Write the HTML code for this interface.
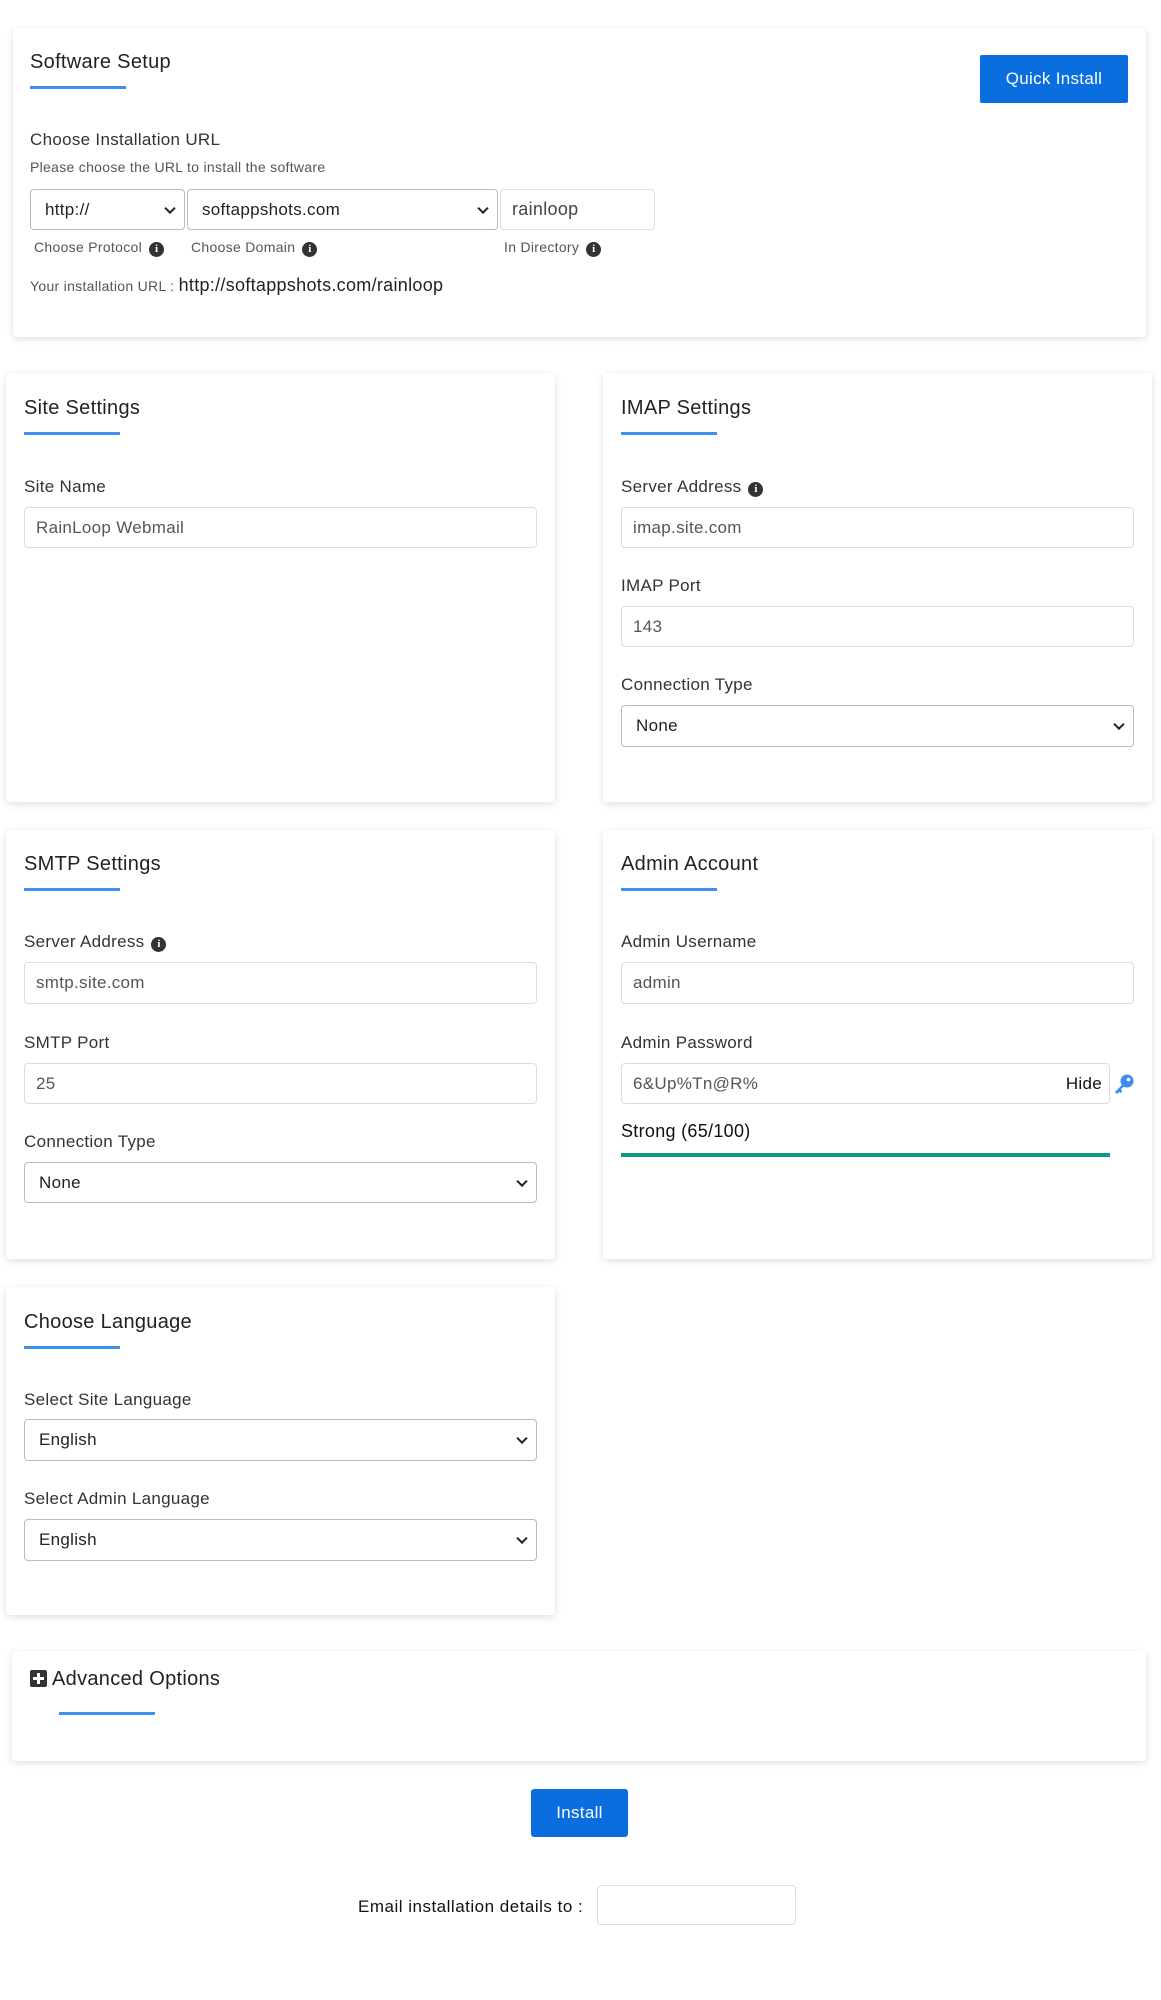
<!DOCTYPE html>
<html><head><meta charset="utf-8"><style>
*{box-sizing:border-box;margin:0;padding:0}
body{width:1161px;height:2000px;background:#fff;position:relative;font-family:"Liberation Sans",sans-serif;color:#222;overflow:hidden}
.card{position:absolute;background:#fff;border-radius:4px;box-shadow:0 2px 8px rgba(0,0,0,.13)}
.t{position:absolute;white-space:nowrap;line-height:24px;height:24px;margin-top:3px}
.h{font-size:20px;color:#222;letter-spacing:.3px}
.lb{font-size:17px;color:#333;letter-spacing:.3px}
.ul{position:absolute;height:3px;background:#3d8ef0;width:96px}
.in{position:absolute;border:1px solid #ddd;border-radius:4px;font-size:17px;color:#555;padding-left:11px;display:flex;align-items:center;background:#fff;letter-spacing:.3px}
.sel{position:absolute;border:1px solid #bbb;border-radius:4px;font-size:17px;color:#222;padding-left:14px;display:flex;align-items:center;background:#fff;letter-spacing:.3px}
.sel:after{content:"";position:absolute;right:10px;top:50%;width:6px;height:6px;border-right:2px solid #222;border-bottom:2px solid #222;transform:translateY(-70%) rotate(45deg)}
.i{display:inline-block;width:15px;height:15px;border-radius:50%;background:#333;color:#fff;font-size:11px;font-weight:bold;line-height:15px;text-align:center;vertical-align:0px;margin-left:7px;font-family:"Liberation Serif",serif;letter-spacing:0}
.sm{font-size:14px;color:#555;letter-spacing:.3px}
.btn{position:absolute;background:#0a6ede;color:#fff;font-size:17px;display:flex;align-items:center;justify-content:center;border-radius:2px;letter-spacing:.3px}
</style></head><body>

<div class="card" style="left:13px;top:28px;width:1133px;height:309px"></div>
<div class="t h" style="left:30px;top:47px">Software Setup</div>
<div class="ul" style="left:30px;top:86px"></div>
<div class="btn" style="left:980px;top:55px;width:148px;height:48px">Quick Install</div>
<div class="t lb" style="left:30px;top:125px">Choose Installation URL</div>
<div class="t sm" style="left:30px;top:152px">Please choose the URL to install the software</div>
<div class="sel" style="left:30px;top:189px;width:155px;height:41px;padding-left:14px">http://</div>
<div class="sel" style="left:187px;top:189px;width:311px;height:41px;padding-left:14px">softappshots.com</div>
<div class="in" style="left:500px;top:189px;width:155px;height:41px;color:#444;font-size:18px">rainloop</div>
<div class="t sm" style="left:34px;top:232px">Choose Protocol<span class="i">i</span></div>
<div class="t sm" style="left:191px;top:232px">Choose Domain<span class="i">i</span></div>
<div class="t sm" style="left:504px;top:232px">In Directory<span class="i">i</span></div>
<div class="t" style="left:30px;top:270px"><span class="sm">Your installation URL : </span><span style="font-size:18px;color:#222;letter-spacing:.3px">http://softappshots.com/rainloop</span></div>

<div class="card" style="left:6px;top:373px;width:549px;height:429px"></div>
<div class="t h" style="left:24px;top:393px">Site Settings</div>
<div class="ul" style="left:24px;top:432px"></div>
<div class="t lb" style="left:24px;top:472px">Site Name</div>
<div class="in" style="left:24px;top:507px;width:513px;height:41px">RainLoop Webmail</div>

<div class="card" style="left:603px;top:373px;width:549px;height:429px"></div>
<div class="t h" style="left:621px;top:393px">IMAP Settings</div>
<div class="ul" style="left:621px;top:432px"></div>
<div class="t lb" style="left:621px;top:472px">Server Address<span class="i">i</span></div>
<div class="in" style="left:621px;top:507px;width:513px;height:41px">imap.site.com</div>
<div class="t lb" style="left:621px;top:571px">IMAP Port</div>
<div class="in" style="left:621px;top:606px;width:513px;height:41px">143</div>
<div class="t lb" style="left:621px;top:670px">Connection Type</div>
<div class="sel" style="left:621px;top:705px;width:513px;height:42px">None</div>

<div class="card" style="left:6px;top:830px;width:549px;height:429px"></div>
<div class="t h" style="left:24px;top:849px">SMTP Settings</div>
<div class="ul" style="left:24px;top:888px"></div>
<div class="t lb" style="left:24px;top:927px">Server Address<span class="i">i</span></div>
<div class="in" style="left:24px;top:962px;width:513px;height:42px">smtp.site.com</div>
<div class="t lb" style="left:24px;top:1028px">SMTP Port</div>
<div class="in" style="left:24px;top:1063px;width:513px;height:41px">25</div>
<div class="t lb" style="left:24px;top:1127px">Connection Type</div>
<div class="sel" style="left:24px;top:1162px;width:513px;height:41px">None</div>

<div class="card" style="left:603px;top:830px;width:549px;height:429px"></div>
<div class="t h" style="left:621px;top:849px">Admin Account</div>
<div class="ul" style="left:621px;top:888px"></div>
<div class="t lb" style="left:621px;top:927px">Admin Username</div>
<div class="in" style="left:621px;top:962px;width:513px;height:42px">admin</div>
<div class="t lb" style="left:621px;top:1028px">Admin Password</div>
<div class="in" style="left:621px;top:1063px;width:489px;height:41px">6&amp;Up%Tn@R%<span style="position:absolute;right:7px;color:#111">Hide</span></div>
<svg style="position:absolute;left:1113px;top:1073px" width="22" height="22" viewBox="0 0 22 22"><circle cx="14" cy="8" r="6.5" fill="#3d8ef0"/><circle cx="15.5" cy="6.5" r="1.8" fill="#fff"/><path d="M10 11 L2 19 L4 21 L6 19 L8 20 L9 18 L8 16 L12 13Z" fill="#3d8ef0"/></svg>
<div class="t" style="left:621px;top:1116px;font-size:18px;color:#111;letter-spacing:.3px">Strong (65/100)</div>
<div style="position:absolute;left:621px;top:1153px;width:489px;height:4px;background:#0e9784"></div>

<div class="card" style="left:6px;top:1287px;width:549px;height:328px"></div>
<div class="t h" style="left:24px;top:1307px">Choose Language</div>
<div class="ul" style="left:24px;top:1346px"></div>
<div class="t lb" style="left:24px;top:1385px">Select Site Language</div>
<div class="sel" style="left:24px;top:1419px;width:513px;height:42px">English</div>
<div class="t lb" style="left:24px;top:1484px">Select Admin Language</div>
<div class="sel" style="left:24px;top:1519px;width:513px;height:42px">English</div>

<div class="card" style="left:12px;top:1651px;width:1134px;height:110px"></div>
<div style="position:absolute;left:30px;top:1670px;width:17px;height:17px;background:#333;border-radius:2px"><div style="position:absolute;left:7px;top:3px;width:3px;height:11px;background:#fff"></div><div style="position:absolute;left:3px;top:7px;width:11px;height:3px;background:#fff"></div></div>
<div class="t h" style="left:52px;top:1664px">Advanced Options</div>
<div class="ul" style="left:59px;top:1712px"></div>

<div class="btn" style="left:531px;top:1789px;width:97px;height:48px;border-radius:3px">Install</div>
<div class="t" style="left:358px;top:1892px;font-size:17px;color:#111;letter-spacing:.5px">Email installation details to :</div>
<div class="in" style="left:597px;top:1885px;width:199px;height:40px"></div>
</body></html>
